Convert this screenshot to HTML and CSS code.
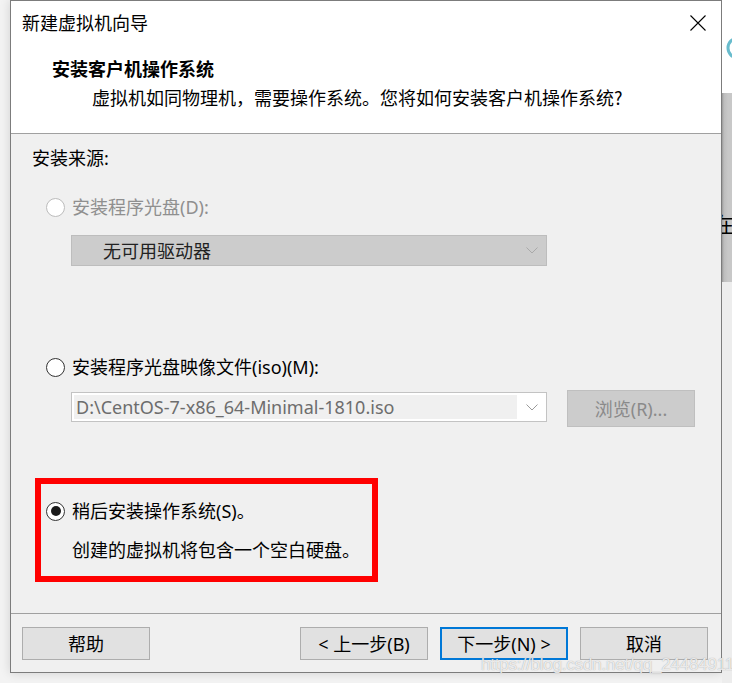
FILE: index.html
```html
<!DOCTYPE html>
<html lang="zh-CN">
<head>
<meta charset="utf-8">
<title>新建虚拟机向导</title>
<link rel="stylesheet" href="styles.css">
</head>
<body>
<div class="screen">
  <div class="window">
    <div class="titlebar">
      <span class="title">新建虚拟机向导</span>
      <svg class="close" width="16" height="16" viewBox="0 0 16 16"><path d="M0.5 0.5 L15.5 15.5 M15.5 0.5 L0.5 15.5" stroke="#000" stroke-width="1.1" fill="none"/></svg>
    </div>
    <div class="header">
      <div class="h-title">安装客户机操作系统</div>
      <div class="h-sub">虚拟机如同物理机，需要操作系统。您将如何安装客户机操作系统?</div>
    </div>
    <div class="content">
      <div class="label">安装来源:</div>
      <div class="radio-row disabled first">
        <span class="radio"></span><span>安装程序光盘(D):</span>
      </div>
      <div class="select disabled">
        <span class="select-text">无可用驱动器</span>
        <svg class="chev" width="12" height="7" viewBox="0 0 12 7"><path d="M0.5 0.5 L6 6 L11.5 0.5" stroke="#a9a9a9" stroke-width="1" fill="none"/></svg>
      </div>
      <div class="radio-row second">
        <span class="radio"></span><span>安装程序光盘映像文件(iso)(M):</span>
      </div>
      <div class="iso-row">
        <div class="combo">
          <div class="combo-field">D:\CentOS-7-x86_64-Minimal-1810.iso</div>
          <div class="combo-arrow"><svg class="chev" width="12" height="7" viewBox="0 0 12 7"><path d="M0.5 0.5 L6 6 L11.5 0.5" stroke="#9a9a9a" stroke-width="1" fill="none"/></svg></div>
        </div>
        <div class="btn browse">浏览(R)...</div>
      </div>
      <div class="highlight">
        <div class="radio-row">
          <span class="radio checked"></span><span>稍后安装操作系统(S)。</span>
        </div>
        <div class="desc">创建的虚拟机将包含一个空白硬盘。</div>
      </div>
    </div>
    <div class="footer">
      <div class="btn">帮助</div>
      <div class="spacer"></div>
      <div class="btn">&lt; 上一步(B)</div>
      <div class="btn primary">下一步(N) &gt;</div>
      <div class="btn">取消</div>
    </div>
  </div>
  <div class="side">
    <div class="side-top">
      <svg width="10" height="93" viewBox="0 0 10 93"><circle cx="16" cy="48" r="10" stroke="#68bccd" stroke-width="3" fill="none"/></svg>
    </div>
    <div class="side-grey"><span class="side-char">在</span></div>
    <div class="side-bottom"></div>
  </div>
</div>
<div class="watermark">https://blog.csdn.net/qq_24484911</div>
</body>
</html>
```

FILE: styles.css
```css
* { box-sizing: border-box; }
html, body { margin: 0; padding: 0; }
body {
  background: #f3f3f3;
  font-family: "Noto Sans", "Noto Sans CJK SC", sans-serif;
  font-size: 18px;
  color: #000;
  overflow: hidden;
}
.screen {
  display: flex;
  height: 683px;
}
.window {
  width: 712px;
  height: 673px;
  margin-left: 10px;
  border: 1px solid #7c7c7c;
  background: #f0f0f0;
  display: flex;
  flex-direction: column;
  flex: none;
  box-shadow: 0 0 10px rgba(0,0,0,0.14);
}
.titlebar {
  height: 44px;
  background: #fff;
  display: flex;
  justify-content: space-between;
  align-items: flex-start;
  padding: 9px 15px 0 11px;
}
.title {
  line-height: 24px;
  font-family: "Noto Sans CJK SC", sans-serif;
}
.close { margin-top: 5px; }
.header {
  height: 89px;
  background: #fff;
  border-bottom: 1px solid #a0a0a0;
  padding: 11px 0 0 41px;
}
.h-title {
  font-family: "Noto Sans CJK SC", sans-serif;
  font-weight: 700;
  line-height: 24px;
}
.h-sub {
  font-family: "Noto Sans CJK SC", sans-serif;
  line-height: 24px;
  margin-top: 5px;
  padding-left: 40px;
}
.content {
  height: 479px;
  padding-top: 12px;
}
.label {
  line-height: 24px;
  margin-left: 21px;
}
.radio-row {
  display: flex;
  align-items: center;
  gap: 7px;
  height: 24px;
  line-height: 24px;
}
.radio-row.first { margin: 25px 0 0 35px; }
.radio-row.second { margin: 89px 0 0 35px; }
.radio {
  width: 19px;
  height: 19px;
  border-radius: 50%;
  border: 1px solid #333;
  background: #fff;
  display: flex;
  align-items: center;
  justify-content: center;
  flex: none;
}
.radio.checked::after {
  content: "";
  width: 10px;
  height: 10px;
  border-radius: 50%;
  background: #1a1a1a;
}
.radio-row.disabled { color: #8f8f8f; }
.radio-row.disabled .radio { border-color: #bcbcbc; }
.select {
  margin: 16px 0 0 60px;
  width: 476px;
  height: 31px;
  background: #cccccc;
  border: 1px solid #bdbdbd;
  display: flex;
  align-items: center;
  justify-content: space-between;
  padding: 0 8px 0 31px;
}
.select-text { line-height: 24px; color: #222; }
.iso-row {
  display: flex;
  align-items: flex-start;
  margin: 11px 0 0 60px;
}
.combo {
  margin-top: 2px;
  width: 476px;
  height: 30px;
  border: 1px solid #c3c3c3;
  background: #fff;
  display: flex;
  padding: 2px;
}
.combo-field {
  width: 443px;
  background: #f0f0f0;
  color: #6d6d6d;
  line-height: 24px;
  padding-left: 2px;
  white-space: nowrap;
  overflow: hidden;
}
.combo-arrow {
  flex: 1;
  display: flex;
  align-items: center;
  justify-content: flex-end;
  padding-right: 6px;
}
.btn {
  width: 128px;
  height: 33px;
  background: #e1e1e1;
  border: 1px solid #adadad;
  display: flex;
  align-items: center;
  justify-content: center;
  line-height: 24px;
  flex: none;
}
.btn.browse {
  margin-left: 20px;
  height: 37px;
  background: #cccccc;
  border-color: #bfbfbf;
  color: #8a8a8a;
}
.btn.primary {
  border: 2px solid #0078d7;
}
.highlight {
  margin: 51px 0 0 24px;
  width: 343px;
  height: 104px;
  border: 6px solid #ff0000;
  padding: 15px 0 0 5px;
}
.desc {
  margin-top: 15px;
  padding-left: 26px;
  line-height: 24px;
}
.footer {
  height: 59px;
  border-top: 1px solid #a0a0a0;
  display: flex;
  gap: 12px;
  padding: 13px 13px 0 11px;
}
.spacer { flex: 1; }
.side {
  flex: 1;
  display: flex;
  flex-direction: column;
  overflow: hidden;
}
.side-top {
  height: 93px;
  background: #fff;
  flex: none;
}
.side-top svg { display: block; }
.side-grey {
  height: 189px;
  flex: none;
  background: linear-gradient(to right, #9a9a9a 0, #bdbdbd 2px, #c8c8c8 6px);
  padding-top: 118px;
  overflow: hidden;
}
.side-char {
  display: block;
  margin-left: -9px;
  font-family: "Noto Sans CJK SC", sans-serif;
  font-size: 21px;
  line-height: 24px;
  color: #000;
}
.side-bottom {
  flex: 1;
  background: #ededed;
}
.watermark {
  position: absolute;
  left: 481px;
  top: 653px;
  font-family: "Liberation Sans", sans-serif;
  font-size: 17px;
  letter-spacing: -0.2px;
  line-height: 24px;
  color: rgba(255,255,255,0.8);
  text-shadow: 0 0 1px rgba(110,110,110,0.7);
  white-space: nowrap;
  pointer-events: none;
}
```
